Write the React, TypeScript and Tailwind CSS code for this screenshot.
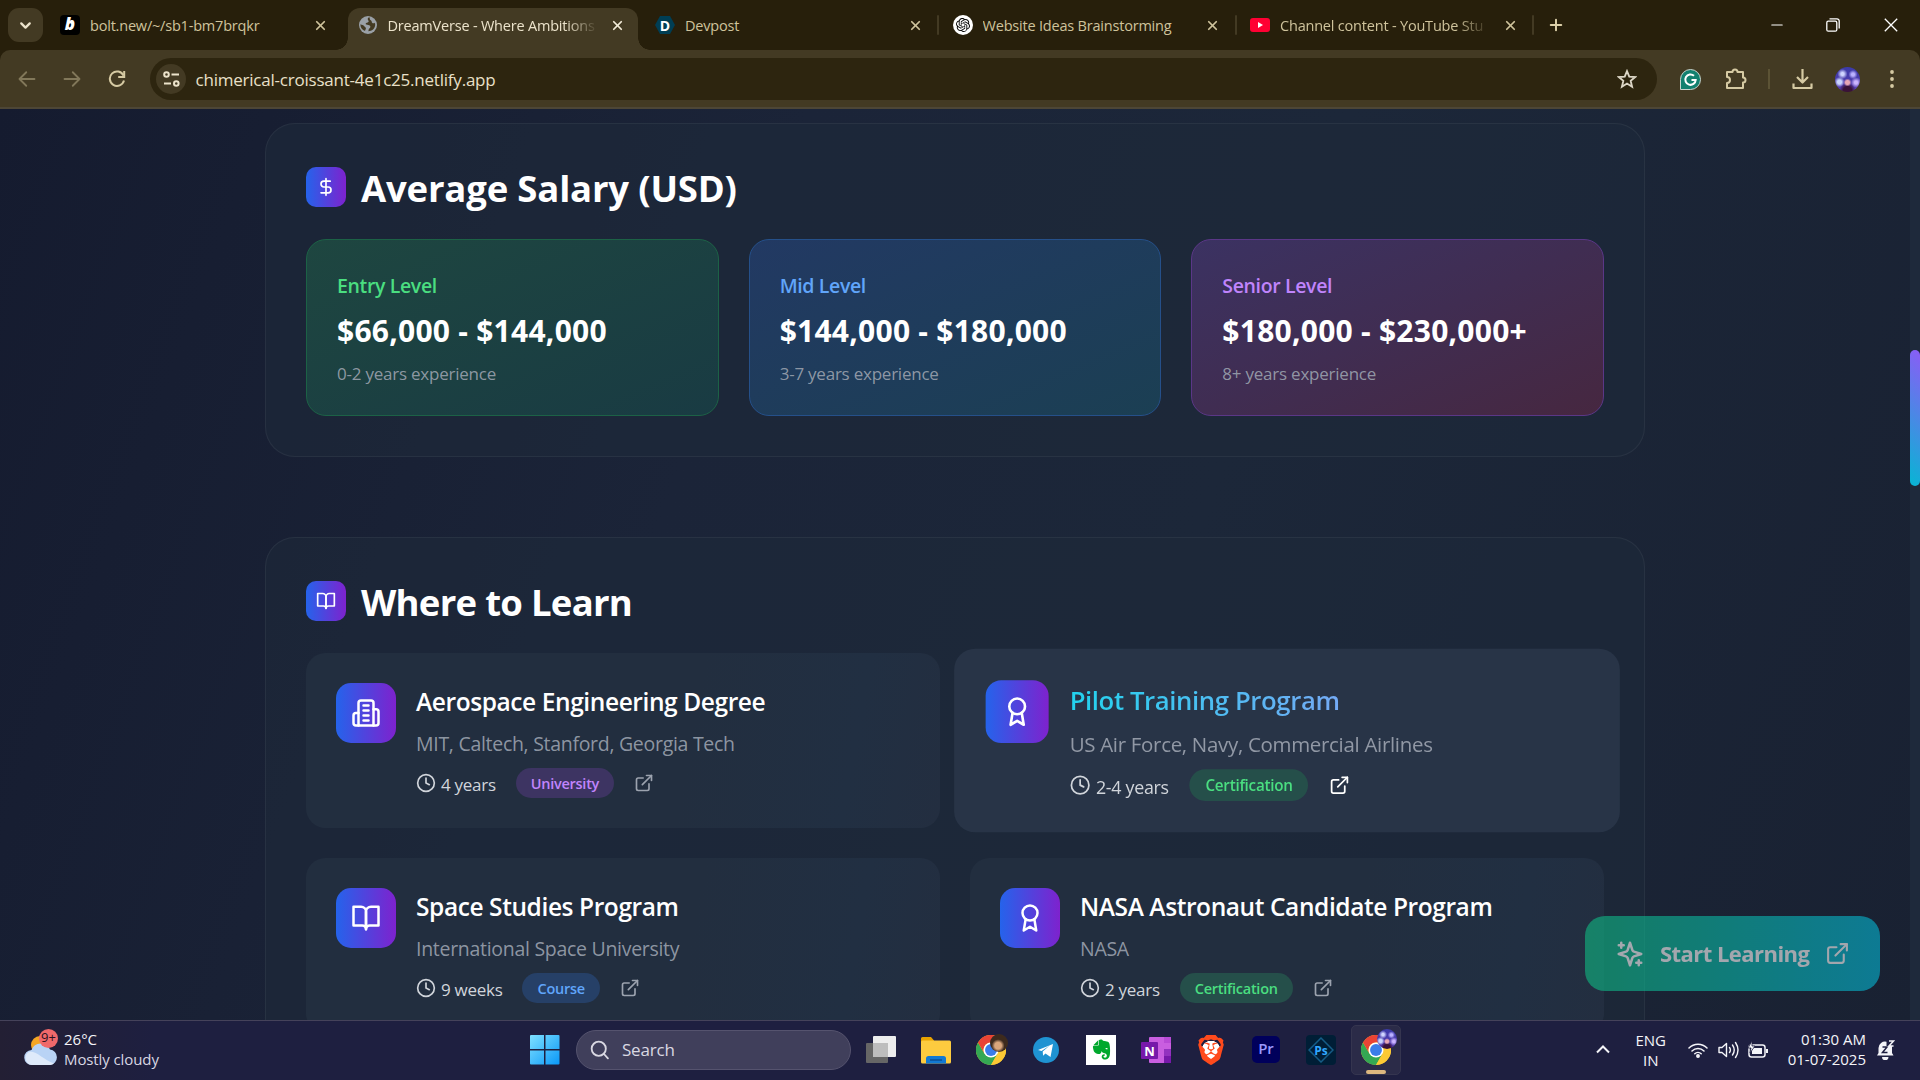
import type { ReactNode } from 'react';
import clsx from 'clsx';
import { ChevronDown, Clock, DollarSign, ExternalLink, Minus, Plus, X } from 'lucide-react';
import { FaBrave, FaEvernote } from 'react-icons/fa6';
import { SiOpenai } from 'react-icons/si';

type Tab = { title: string; icon: ReactNode; active?: boolean; faded?: boolean; separator?: boolean };

const tabs: Tab[] = [
  { title: 'bolt.new/~/sb1-bm7brqkr', icon: <BoltIcon /> },
  { title: 'DreamVerse - Where Ambitions', icon: <GlobeIcon />, active: true, faded: true },
  { title: 'Devpost', icon: <DevpostIcon />, separator: true },
  { title: 'Website Ideas Brainstorming', icon: <OpenAiBadge />, separator: true },
  { title: 'Channel content - YouTube Stu', icon: <YouTubeIcon />, faded: true, separator: true },
];

const salaries = [
  {
    level: 'Entry Level',
    range: '$66,000 - $144,000',
    note: '0-2 years experience',
    card: 'from-[#1e4640] to-[#193b43] border-[#1c6246]',
    label: 'text-[#4ade80]',
  },
  {
    level: 'Mid Level',
    range: '$144,000 - $180,000',
    note: '3-7 years experience',
    card: 'from-[#223963] to-[#1b3f53] border-[#25508a]',
    label: 'text-[#60a5fa]',
  },
  {
    level: 'Senior Level',
    range: '$180,000 - $230,000+',
    note: '8+ years experience',
    card: 'from-[#3b3262] via-[#402d52] to-[#462740] border-[#5b3787]',
    label: 'text-[#c084fc]',
  },
];

type Program = {
  title: string;
  school: string;
  duration: string;
  kind: 'University' | 'Certification' | 'Course';
  icon: ReactNode;
  hovered?: boolean;
};

const programs: Program[] = [
  {
    title: 'Aerospace Engineering Degree',
    school: 'MIT, Caltech, Stanford, Georgia Tech',
    duration: '4 years',
    kind: 'University',
    icon: <BuildingIcon />,
  },
  {
    title: 'Pilot Training Program',
    school: 'US Air Force, Navy, Commercial Airlines',
    duration: '2-4 years',
    kind: 'Certification',
    icon: <AwardIcon />,
    hovered: true,
  },
  {
    title: 'Space Studies Program',
    school: 'International Space University',
    duration: '9 weeks',
    kind: 'Course',
    icon: <BookIcon size={30} />,
  },
  {
    title: 'NASA Astronaut Candidate Program',
    school: 'NASA',
    duration: '2 years',
    kind: 'Certification',
    icon: <AwardIcon />,
  },
];

const pillColors = {
  University: 'bg-[#3d3462] text-[#c084fc]',
  Certification: 'bg-[#254f4a] text-[#4ade80]',
  Course: 'bg-[#264067] text-[#60a5fa]',
};

function Stroke({ size, width = 2, children }: { size: number; width?: number; children: ReactNode }) {
  return (
    <svg
      width={size}
      height={size}
      viewBox="0 0 24 24"
      fill="none"
      stroke="currentColor"
      strokeWidth={width}
      strokeLinecap="round"
      strokeLinejoin="round"
    >
      {children}
    </svg>
  );
}

function BuildingIcon() {
  return (
    <Stroke size={30}>
      <path d="M6 22V4a2 2 0 0 1 2-2h8a2 2 0 0 1 2 2v18Z" />
      <path d="M6 12H4a2 2 0 0 0-2 2v6a2 2 0 0 0 2 2h2" />
      <path d="M18 9h2a2 2 0 0 1 2 2v9a2 2 0 0 1-2 2h-2" />
      <path d="M10 6h4M10 10h4M10 14h4M10 18h4" />
    </Stroke>
  );
}

function AwardIcon() {
  return (
    <Stroke size={30}>
      <circle cx="12" cy="8" r="6" />
      <path d="M15.477 12.89 17 22l-5-3-5 3 1.523-9.11" />
    </Stroke>
  );
}

function BookIcon({ size }: { size: number }) {
  return (
    <Stroke size={size}>
      <path d="M2 3h6a4 4 0 0 1 4 4v14a3 3 0 0 0-3-3H2z" />
      <path d="M22 3h-6a4 4 0 0 0-4 4v14a3 3 0 0 1 3-3h7z" />
    </Stroke>
  );
}

function SparklesIcon() {
  return (
    <Stroke size={30}>
      <path d="m12 3-1.912 5.813a2 2 0 0 1-1.275 1.275L3 12l5.813 1.912a2 2 0 0 1 1.275 1.275L12 21l1.912-5.813a2 2 0 0 1 1.275-1.275L21 12l-5.813-1.912a2 2 0 0 1-1.275-1.275L12 3Z" />
      <path d="M5 3v4M19 17v4M3 5h4M17 19h4" />
    </Stroke>
  );
}

function BoltIcon() {
  return (
    <span className="flex size-5 items-center justify-center rounded-[4px] bg-black pb-0.5 text-[17px] font-extrabold text-white italic">
      b
    </span>
  );
}

function GlobeIcon() {
  return (
    <svg width="20" height="20" viewBox="0 0 20 20">
      <circle cx="10" cy="10" r="9" fill="#9aa0a6" />
      <path
        d="M11.5 2.2c-1.3.4-2 1.200-1.700 2.200.2.9 1 1 .9 2-.2 1-1.700.9-2.500 1.500-.8.5-.7 1.300.2 1.600 1.300.4 2.700.2 3.600 1.300.8 1 .2 2.200-.7 2.800-.8.600-.6 1.700-1 2.600 3.500 0 6.900-2.800 6.900-6.500 0-.9-.2-1.400-.4-2-.8.900-2 .800-2.700 0-.6-.7-.1-1.300-.8-2-.7-.6-1.400-.7-1.500-1.600 0-.7-.1-1.300-.3-1.900zM2.400 9.200c1.500.6 3.200.8 3.900 2.100.5 1 1.700 1 1.600 2.200-.1 1-.9 1.300-.8 2.500C4.200 14.900 2.200 12.300 2.400 9.200z"
        fill="#433a23"
      />
    </svg>
  );
}

function DevpostIcon() {
  return (
    <span className="flex h-[18px] w-5 items-center justify-center bg-[#003e54] text-[14px] font-bold text-white [clip-path:polygon(25%_0,75%_0,100%_50%,75%_100%,25%_100%,0_50%)]">
      D
    </span>
  );
}

function OpenAiBadge() {
  return (
    <span className="flex size-5 items-center justify-center rounded-full bg-white text-black">
      <SiOpenai size={14} />
    </span>
  );
}

function YouTubeIcon() {
  return (
    <svg width="20" height="14" viewBox="0 0 20 14">
      <rect width="20" height="14" rx="3" fill="#ff0033" />
      <path d="M8 4v6l5-3z" fill="#fff" />
    </svg>
  );
}

function Avatar({ className }: { className: string }) {
  return (
    <span
      className={clsx(
        'block rounded-full bg-[radial-gradient(circle_at_50%_62%,#e7a6b5_0_10%,transparent_20%),radial-gradient(circle_at_30%_28%,#cfd4ff_0_6%,transparent_20%),radial-gradient(circle_at_72%_30%,#b9b0ff_0_6%,transparent_18%),radial-gradient(circle_at_50%_95%,#3a1238_0_16%,transparent_30%),radial-gradient(circle_at_18%_60%,#c9d4ff_0_8%,transparent_20%),radial-gradient(circle_at_84%_62%,#cbb4ff_0_6%,transparent_20%),linear-gradient(#3b3ba8,#5a3cb0)]',
        className,
      )}
    />
  );
}

function ChromeIcon() {
  return (
    <svg width="30" height="30" viewBox="0 0 48 48">
      <circle cx="24" cy="24" r="24" fill="#fcc934" />
      <path d="M3.200 12A24 24 0 0 0 24 48L34.400 30 24 24 13.600 30z" fill="#34a853" />
      <path d="M3.200 12A24 24 0 0 1 44.800 12H24A12 12 0 0 0 13.600 30z" fill="#ea4335" />
      <path d="M44.800 12A24 24 0 0 1 24 48L34.400 30A12 12 0 0 0 34.400 18L24 12z" fill="#fcc934" />
      <circle cx="24" cy="24" r="12" fill="#fff" />
      <circle cx="24" cy="24" r="9.500" fill="#3b7de9" />
    </svg>
  );
}

function BrowserTab({ tab }: { tab: Tab }) {
  return (
    <div className="relative flex h-[50px] w-[297.5px] shrink-0 items-center pr-[16.5px] pl-[13.5px]">
      {tab.active && (
        <div className="absolute top-2 right-1 bottom-0 left-1 rounded-t-[12px] bg-[#433a23]">
          <span className="absolute bottom-0 -left-3 size-3 bg-[radial-gradient(circle_at_0_0,#271f0b_11.5px,#433a23_12px)]" />
          <span className="absolute -right-3 bottom-0 size-3 bg-[radial-gradient(circle_at_100%_0,#271f0b_11.5px,#433a23_12px)]" />
        </div>
      )}
      <span className="relative flex w-5 shrink-0 justify-center">{tab.icon}</span>
      <span
        className={clsx(
          'relative ml-[10px] w-[210px] overflow-hidden pt-0.5 text-[14.5px] leading-6 tracking-[-0.2px] whitespace-nowrap',
          tab.active ? 'text-[#ece3cb]' : 'text-[#cfc39c]',
          tab.faded && '[mask-image:linear-gradient(to_right,#000_84%,transparent)]',
        )}
      >
        {tab.title}
      </span>
      <X
        size={15}
        strokeWidth={2.800}
        className={clsx('relative ml-auto shrink-0', tab.active ? 'text-[#f3ecd9]' : 'text-[#cfc39c]')}
      />
      {tab.separator && <span className="absolute top-[15px] right-0 h-5 w-0.5 rounded bg-[#433a23]" />}
    </div>
  );
}

function TabStrip() {
  return (
    <div className="flex h-[50px] items-center bg-[#271f0b] pl-2">
      <div className="flex h-[34px] w-[35px] items-center justify-center rounded-[11px] bg-[#433a23] text-[#ece3cb]">
        <ChevronDown size={17} strokeWidth={3.200} />
      </div>
      <div className="ml-[3.5px] flex">
        {tabs.map((tab) => (
          <BrowserTab key={tab.title} tab={tab} />
        ))}
      </div>
      <Plus size={18} strokeWidth={2.600} className="ml-[13px] text-[#dcd0a9]" />
      <div className="ml-auto flex items-center pr-[22px] text-white">
        <Minus size={18} strokeWidth={1.400} />
        <svg width="14" height="14" viewBox="0 0 14 14" fill="none" stroke="currentColor" className="ml-[40px]">
          <rect x=".8" y="3.200" width="10" height="10" rx="1.500" strokeWidth="1.300" />
          <path d="M3.500 .8h7.500a2.200 2.200 0 0 1 2.200 2.200v7.500" strokeWidth="1.300" />
        </svg>
        <svg width="14" height="14" viewBox="0 0 14 14" stroke="currentColor" className="ml-[44px]">
          <path d="M.8.8l12.400 12.400M13.200.8L.8 13.200" strokeWidth="1.300" />
        </svg>
      </div>
    </div>
  );
}

function Toolbar() {
  return (
    <div className="bg-[#271f0b]">
      <div className="flex h-[59px] items-start rounded-t-[10px] border-b-2 border-[#4d4636] bg-[#433a23] pt-2 text-[#cfc39c]">
        <div className="flex h-[42px] items-center pl-[18px]">
          <Stroke size={18} width={2.400}>
            <path d="M22 12H2M11 3l-9 9 9 9" stroke="#82785a" />
          </Stroke>
          <span className="ml-[27px]">
            <Stroke size={18} width={2.400}>
              <path d="M2 12h20M13 3l9 9-9 9" stroke="#82785a" />
            </Stroke>
          </span>
          <svg width="18" height="18" viewBox="0 0 18 18" fill="none" stroke="#d6caa3" strokeWidth="2" className="ml-[27px]">
            <path d="M15.500 5.500A7.200 7.200 0 1 0 16 10.500" />
            <path d="M16.200 1v6h-6" />
          </svg>
        </div>
        <div className="ml-[24px] flex h-[42px] w-[1507px] items-center rounded-full bg-[#2d250f] pr-[20px] pl-[6px]">
          <span className="flex size-[30px] items-center justify-center rounded-full bg-[#433a23]">
            <svg width="17" height="16" viewBox="0 0 17 16" fill="none" stroke="#ece3cb" strokeWidth="2">
              <circle cx="3.500" cy="3.500" r="2.300" />
              <path d="M8.500 3.500H16M1 12.500h7" />
              <circle cx="13.300" cy="12.500" r="2.300" />
            </svg>
          </span>
          <span className="ml-[9.5px] pt-px text-[17px] tracking-[-0.22px] text-[#e9e0c8]">
            chimerical-croissant-4e1c25.netlify.app
          </span>
          <svg width="20" height="20" viewBox="0 0 24 24" fill="none" stroke="#dcd6c6" strokeWidth="2.200" className="ml-auto">
            <path d="m12 2.500 2.700 6.600 7.100.5-5.400 4.600 1.700 7L12 17.400l-6.100 3.800 1.700-7-5.400-4.600 7.100-.5z" />
          </svg>
        </div>
        <div className="flex h-[42px] items-center pl-[23px]">
          <svg width="21" height="21" viewBox="0 0 21 21">
            <path d="M.5 20.500V10.500a10 10 0 1 1 10 10z" fill="#12806f" stroke="#c9d5cf" />
            <path d="M14 6.800A5.200 5.200 0 1 0 15.700 11h-4.200" fill="none" stroke="#fff" strokeWidth="2" />
          </svg>
          <svg width="23" height="22" viewBox="0 0 23 22" fill="none" stroke="#d6caa3" strokeWidth="2" className="ml-[24px]">
            <path d="M2 4h5.500a2.500 2.500 0 0 1 5 0H18v5.500a2.500 2.500 0 0 1 0 5V20H2v-5a3 3 0 0 0 0-6z" strokeLinejoin="round" />
          </svg>
          <span className="ml-[20px] h-5 w-0.5 bg-[#5c5335]" />
          <svg width="21" height="21" viewBox="0 0 21 21" fill="none" stroke="#d6caa3" strokeWidth="2.200" className="ml-[22px]">
            <path d="M10.500 0v13M5 8l5.500 5.500L16 8M1.500 14.500v4.500h18v-4.500" strokeLinejoin="round" />
          </svg>
          <Avatar className="ml-[22px] size-[25px]" />
          <svg width="4" height="18" viewBox="0 0 4 18" fill="#d6caa3" className="ml-[30px]">
            <circle cx="2" cy="2" r="1.900" />
            <circle cx="2" cy="9" r="1.900" />
            <circle cx="2" cy="16" r="1.900" />
          </svg>
        </div>
      </div>
    </div>
  );
}

function Section({ title, titleClass, icon, children }: { title: string; titleClass: string; icon: ReactNode; children: ReactNode }) {
  return (
    <section className="w-[1380px] shrink-0 rounded-[30px] border border-white/5 bg-[#1e293b]/60 p-10">
      <div className="mb-[30px] flex h-[45px] items-center gap-[15px]">
        <span className="flex size-10 items-center justify-center rounded-[10px] bg-[linear-gradient(to_right,#2563eb,#7e22ce)] text-white">
          {icon}
        </span>
        <h2 className={clsx('pt-[3px] text-[36.5px] leading-[45px] font-bold text-white', titleClass)}>{title}</h2>
      </div>
      {children}
    </section>
  );
}

function ProgramCard({ program }: { program: Program }) {
  const { title, school, duration, kind, icon, hovered } = program;
  return (
    <div
      className={clsx(
        'flex h-[175px] items-start gap-5 rounded-[20px] p-[30px]',
        hovered ? 'scale-105 bg-[#283447]' : 'bg-[linear-gradient(100deg,#222e3f,#222e3f_60%,#212f42_85%,#232e40)]',
      )}
    >
      <span className="flex size-[60px] shrink-0 items-center justify-center rounded-[15px] bg-[linear-gradient(to_right,#2563eb,#7e22ce)] text-white">
        {icon}
      </span>
      <div className="flex-1">
        <h3
          className={clsx(
            'h-[35px] text-[24.5px] leading-[37px] font-semibold whitespace-nowrap',
            hovered
              ? 'bg-[linear-gradient(to_right,#22d3ee,#c084fc)] bg-clip-text tracking-[-0.38px] text-transparent'
              : 'tracking-[-0.41px] text-white',
          )}
        >
          {title}
        </h3>
        <p className="mt-2.5 h-[30px] text-[19.5px] leading-[31px] tracking-[-0.29px] text-[#9ca3af]/90">{school}</p>
        <div className="mt-2.5 flex h-[30px] items-center gap-5">
          <span className="flex items-center gap-[5px] text-[#d1d5db]">
            <Clock size={20} />
            <span className="pt-[3px] text-[17px] leading-[25px] tracking-[-0.28px]">{duration}</span>
          </span>
          <span
            className={clsx(
              'flex h-[30px] items-center rounded-full px-[15px] pt-px text-[14.5px] font-semibold tracking-[-0.26px]',
              pillColors[kind],
            )}
          >
            {kind}
          </span>
          <ExternalLink size={20} className={hovered ? 'text-white' : 'text-[#9ca3af]'} />
        </div>
      </div>
    </div>
  );
}

function Page() {
  return (
    <main className="relative flex h-[911px] overflow-hidden bg-[linear-gradient(110deg,#151b2f_0%,#1b2438_36%,#1c2739_60%,#192132_100%)]">
      <div className="flex w-[1910px] flex-col items-center gap-20 pt-[14px]">
        <Section title="Average Salary (USD)" titleClass="tracking-[-0.18px]" icon={<DollarSign size={20} />}>
          <div className="grid grid-cols-3 gap-[30px]">
            {salaries.map((s) => (
              <div key={s.level} className={clsx('h-[177px] rounded-[20px] border bg-gradient-to-br p-[30px]', s.card)}>
                <h3 className={clsx('h-[30px] text-[19.5px] leading-[31px] font-semibold tracking-[-0.36px]', s.label)}>
                  {s.level}
                </h3>
                <p className="mt-2.5 h-10 text-[30px] leading-[42px] font-bold tracking-[0.25px] whitespace-nowrap text-white">
                  {s.range}
                </p>
                <p className="mt-2.5 text-[17px] leading-[28px] tracking-[-0.23px] text-[#9ca3af]/90">{s.note}</p>
              </div>
            ))}
          </div>
        </Section>
        <Section title="Where to Learn" titleClass="tracking-[-0.72px]" icon={<BookIcon size={20} />}>
          <div className="grid grid-cols-2 gap-[30px]">
            {programs.map((p) => (
              <ProgramCard key={p.title} program={p} />
            ))}
          </div>
        </Section>
      </div>
      <div className="w-[10px] bg-[#1e293b]">
        <div className="mt-[241px] h-[136px] rounded-full bg-[linear-gradient(45deg,#06b6d4,#8b5cf6)]" />
      </div>
      <button
        type="button"
        className="absolute right-10 bottom-[29px] flex h-[75px] w-[295px] items-center rounded-[20px] bg-[linear-gradient(to_right,#10b981,#06b6d4)] px-[30px] text-white opacity-60"
      >
        <SparklesIcon />
        <span className="ml-[15px] text-[22px] font-bold tracking-[-0.54px] whitespace-nowrap">Start Learning</span>
        <ExternalLink size={25} className="ml-auto shrink-0" />
      </button>
    </main>
  );
}

function Taskbar() {
  return (
    <footer className="flex h-[60px] items-center border-t border-[#45425a] bg-[linear-gradient(to_right,#231f34,#1e1f40_8%,#1e1f40)] pb-[2px] text-[15px] text-[#f4f4f8]">
      <div className="flex w-[530px] items-center pl-6">
        <div className="relative h-[38px] w-[40px]">
          <svg width="34" height="36" viewBox="0 0 34 36" className="mt-px">
            <circle cx="16" cy="13" r="9" fill="#f5a623" />
            <path d="M8 33a7.500 7.500 0 0 1-.5-15A10 10 0 0 1 26 17.500 7.800 7.800 0 0 1 26 33z" fill="#b9d3f5" />
            <path d="M8 33a7 7 0 0 1-2-13.500C14 20 20 28 30 31.500A8 8 0 0 1 26 33z" fill="#dfeafa" />
          </svg>
          <span className="absolute -top-0.5 left-[15px] flex size-[19px] items-center justify-center rounded-full bg-[#f0696b] text-[13px] text-[#2a1220]">
            9+
          </span>
        </div>
        <div className="pb-0.5 leading-5">
          <div>26°C</div>
          <div className="tracking-[-0.1px] text-[#d8d6e2]">Mostly cloudy</div>
        </div>
      </div>
      <div className="flex w-[872px] items-center">
        <svg width="30" height="30" viewBox="0 0 30 30">
          <defs>
            <linearGradient id="win" x1="0" y1="0" x2="1" y2="1" gradientUnits="objectBoundingBox">
              <stop offset="0" stopColor="#7fe0ff" />
              <stop offset="1" stopColor="#0a98f8" />
            </linearGradient>
          </defs>
          <path d="M0 1a1 1 0 0 1 1-1h13v14H0zM15.500 0h13a1 1 0 0 1 1 1v13h-14zM0 15.500h14v14H1a1 1 0 0 1-1-1zM15.500 15.500h14v13a1 1 0 0 1-1 1h-13z" fill="url(#win)" />
        </svg>
        <div className="ml-4 flex h-10 w-[275px] items-center rounded-full border border-[#55536e] bg-[#403f5b] pl-[13px] text-[#d9d8e2]">
          <Stroke size={20} width={2.200}>
            <circle cx="10.500" cy="10.500" r="8.500" />
            <path d="m16.500 16.500 5 5.500" />
          </Stroke>
          <span className="ml-[12px] pt-px text-[17px] tracking-[-0.2px]">Search</span>
        </div>
        <svg width="30" height="28" viewBox="0 0 30 28" className="ml-[15px]">
          <rect y="7" width="22" height="20" rx="1" fill="#666" />
          <rect x="7" width="23" height="21" rx="1" fill="#ededed" />
          <rect x="7" y="7" width="15" height="14" fill="#bdbdbd" />
        </svg>
        <svg width="30" height="28" viewBox="0 0 30 28" className="ml-[25px]">
          <path d="M0 2.500A1.500 1.500 0 0 1 1.500 1H10l3 3.500V10H0z" fill="#e8a200" />
          <rect y="4.500" width="30" height="23" rx="1.500" fill="#fdcb3f" />
          <path d="M5 27.500v-5a2.500 2.500 0 0 1 2.500-2.500h15a2.500 2.500 0 0 1 2.500 2.500v5z" fill="#1279d3" />
          <path d="M9 24h12" stroke="#0b4f96" strokeWidth="1.500" />
        </svg>
        <div className="relative ml-[25px]">
          <ChromeIcon />
          <span className="absolute -top-px left-[14px] size-[18px] rounded-full bg-[radial-gradient(circle_at_45%_65%,#d9a67c_0_22%,#3d2a1d_42%)]" />
        </div>
        <svg width="26" height="26" viewBox="0 0 26 26" className="ml-[27px]">
          <circle cx="13" cy="13" r="13" fill="#1f93d2" />
          <path d="M5 13 20 7l-2.500 13-5-3.600-2.400 2.400-.4-4.200 7-6L8.500 14z" fill="#fff" />
        </svg>
        <span className="ml-[27px] flex size-[30px] items-center justify-center bg-white text-[#00a82d]">
          <FaEvernote size={23} />
        </span>
        <svg width="30" height="26" viewBox="0 0 30 26" className="ml-[25px]">
          <rect x="8" width="22" height="26" rx="1" fill="#c95ee0" />
          <path d="M23 0h7v6h-7z" fill="#b94bd6" />
          <path d="M23 12h7v7h-7z" fill="#9332bf" />
          <path d="M23 19h7v7h-7z" fill="#7719aa" />
          <rect y="5" width="17" height="17" rx="1" fill="#7719aa" />
          <text x="8.500" y="18.500" textAnchor="middle" fontSize="13" fontWeight="700" fill="#fff">N</text>
        </svg>
        <span className="ml-[25px] flex size-[30px] items-center justify-center bg-[radial-gradient(#fff_0_9px,transparent_9.5px)] text-[#ff4a1c]">
          <FaBrave size={30} />
        </span>
        <span className="ml-[26px] flex h-[27px] w-[28px] items-center justify-center rounded-[5px] bg-[#00005b] pb-0.5 text-[15px] font-semibold text-[#9999ff]">
          Pr
        </span>
        <span className="ml-[26px] flex size-[30px] items-center justify-center rounded-[4px] bg-[#001e36]">
          <svg width="26" height="26" viewBox="0 0 26 26">
            <path d="M13 1 25 13 13 25 1 13z" fill="none" stroke="#155c86" strokeWidth="1.500" />
            <text x="13" y="17.500" textAnchor="middle" fontSize="12" fontWeight="700" fill="#31a8ff">Ps</text>
          </svg>
        </span>
        <div className="relative ml-[15px] flex h-[50px] w-[50px] shrink-0 items-center justify-center rounded-[5px] border border-[#35354f] bg-[#2b2b48]">
          <ChromeIcon />
          <Avatar className="absolute top-[3px] right-[3px] size-5" />
          <span className="absolute bottom-0 left-[14px] h-1 w-5 rounded-full bg-[#dcb77f]" />
        </div>
      </div>
      <div className="ml-auto flex items-center pr-[25px]">
        <svg width="14" height="9" viewBox="0 0 14 9" fill="none" stroke="currentColor" strokeWidth="2">
          <path d="m1 7.500 6-6 6 6" />
        </svg>
        <div className="ml-[23px] w-[36px] text-center leading-5">
          ENG
          <br />
          IN
        </div>
        <svg width="20" height="16" viewBox="0 0 20 16" fill="none" stroke="currentColor" strokeWidth="1.500" strokeLinecap="round" className="ml-[19px]">
          <path d="M1 6a12.500 12.500 0 0 1 18 0M4 9a8.500 8.500 0 0 1 12 0M6.800 11.800a4.600 4.600 0 0 1 6.400 0" />
          <circle cx="10" cy="14" r="1.200" fill="currentColor" />
        </svg>
        <svg width="21" height="18" viewBox="0 0 21 18" fill="none" stroke="currentColor" strokeWidth="1.400" strokeLinecap="round" strokeLinejoin="round" className="ml-[10px]">
          <path d="M1 6.500h3l4.500-4v13l-4.500-4H1zM11.500 6.500q1.800 2.500 0 5M14.500 4q3.500 5 0 10M17.500 1.500q5 7.500 0 15" />
        </svg>
        <svg width="20" height="17" viewBox="0 0 20 17" className="ml-[9px]">
          <rect x="1" y="4" width="16" height="12" rx="2.500" fill="none" stroke="currentColor" strokeWidth="1.500" />
          <path d="M18 8h2v4h-2zM4 7h10v6H4z" fill="currentColor" />
          <path d="M4 0 0 7h3l-1 5 5-7H4z" fill="currentColor" stroke="#1e1f40" strokeWidth=".8" />
        </svg>
        <div className="ml-[20px] pb-0.5 text-right leading-5 whitespace-nowrap">
          <div>01:30 AM</div>
          <div>01-07-2025</div>
        </div>
        <svg width="18" height="20" viewBox="0 0 18 20" fill="currentColor" className="ml-[11px]">
          <path d="M0 15.500 1.500 13V8A6.500 6.500 0 0 1 9.500 1.800V6H15v7l1.500 2.500zM5 17h6.500a3.200 3.200 0 0 1-6.500 0z" />
          <path d="M5.500 7h4.500l-4.500 5.500h5" fill="none" stroke="#1e1f40" strokeWidth="1.500" />
          <path d="M12 1h4.500l-4.500 5h4.500" fill="none" stroke="currentColor" strokeWidth="1.500" />
        </svg>
      </div>
    </footer>
  );
}

export default function App() {
  return (
    <div className="flex h-[1080px] w-[1920px] flex-col overflow-hidden font-['Open_Sans','Noto_Sans',sans-serif]">
      <TabStrip />
      <Toolbar />
      <Page />
      <Taskbar />
    </div>
  );
}
